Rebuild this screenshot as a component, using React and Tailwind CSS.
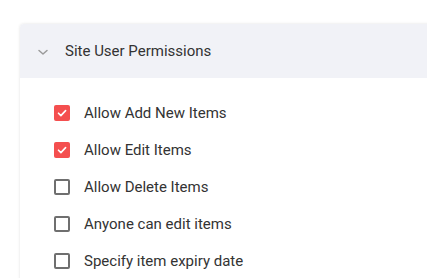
import React from 'react';

const items = [
  { label: 'Allow Add New Items', checked: true },
  { label: 'Allow Edit Items', checked: true },
  { label: 'Allow Delete Items', checked: false },
  { label: 'Anyone can edit items', checked: false },
  { label: 'Specify item expiry date', checked: false },
];

const Box = ({ checked }) =>
  checked ? (
    <span className="w-4 h-4 rounded-[2px] bg-[#f44f4f] flex items-center justify-center shrink-0">
      <svg width="12" height="12" viewBox="0 0 12 12" fill="none">
        <path d="M2.5 6.2l2.4 2.4 4.7-5" stroke="white" strokeWidth="1.6" strokeLinecap="round" strokeLinejoin="round" />
      </svg>
    </span>
  ) : (
    <span className="w-4 h-4 rounded-[2px] border-2 border-[#6f6f6f] shrink-0" />
  );

const App = () => {
  return (
    <div className="w-[427px] h-[278px] bg-white overflow-hidden pt-6 pl-5" style={{ fontFamily: 'Roboto, "Liberation Sans", sans-serif' }}>
      <div className="w-[440px] h-[300px] rounded-tl-[4px] shadow-[0_0_3px_rgba(0,0,0,0.12)] bg-white">
        <div className="h-[54px] bg-[#f1f2f7] rounded-tl-[4px] flex items-center pl-[17px]">
          <svg width="12" height="12" viewBox="0 0 12 12" fill="none" className="mt-[2px]">
            <path d="M2 4.5l4 3.5 4-3.5" stroke="#9a9a9a" strokeWidth="1.5" strokeLinecap="round" strokeLinejoin="round" />
          </svg>
          <span className="ml-4 text-[15px] text-[#333] mt-[1px]">Site User Permissions</span>
        </div>
        <div className="pt-[27px] pl-[34px] flex flex-col gap-[21px]">
          {items.map((it) => (
            <div key={it.label} className="flex items-center h-4">
              <Box checked={it.checked} />
              <span className="ml-[14px] text-[15px] text-[#333]">{it.label}</span>
            </div>
          ))}
        </div>
      </div>
    </div>
  );
};

export default App;
